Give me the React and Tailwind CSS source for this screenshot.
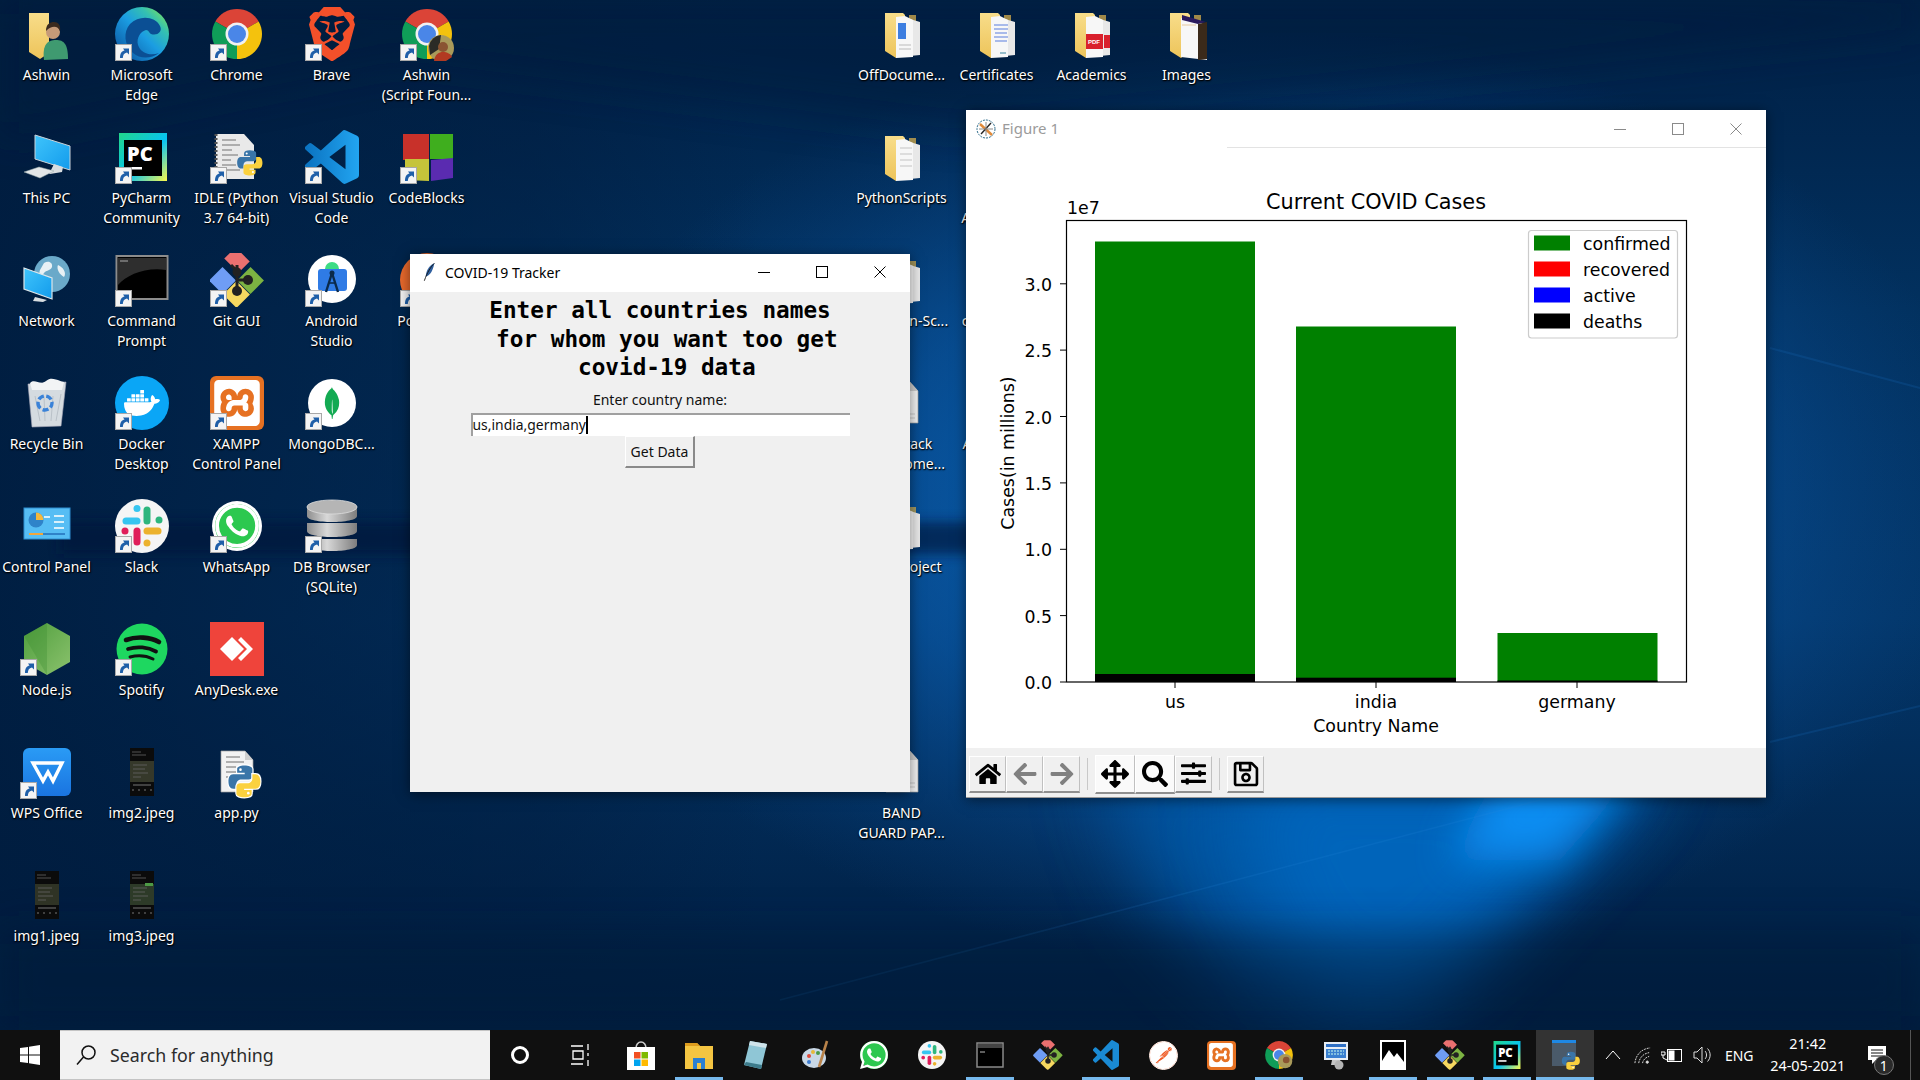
import React from "react";
import { FaHome, FaArrowLeft, FaArrowRight, FaArrowsAlt, FaSearch, FaSlidersH, FaRegSave } from "react-icons/fa";
import { SiBrave, SiDocker, SiXampp, SiMongodb, SiWhatsapp, SiPostman } from "react-icons/si";

const S = ({ children, size = 54, vb = "0 0 54 54", className = "" }) => (
  <svg viewBox={vb} width={size} height={size} className={"block " + className}>{children}</svg>
);

const Defs = () => (
  <svg width="0" height="0" className="absolute">
    <defs>
      <linearGradient id="edgeG" x1="0.1" y1="0.9" x2="0.9" y2="0.1">
        <stop offset="0" stopColor="#0c59a4" /><stop offset="0.5" stopColor="#1b9de2" /><stop offset="0.8" stopColor="#35c1b0" /><stop offset="1" stopColor="#6fdc6a" />
      </linearGradient>
      <linearGradient id="folderG" x1="0" y1="0" x2="0" y2="1">
        <stop offset="0" stopColor="#f8dd8a" /><stop offset="1" stopColor="#edc45a" />
      </linearGradient>
      <linearGradient id="pcG" x1="0" y1="0" x2="1" y2="1">
        <stop offset="0" stopColor="#21d789" /><stop offset="0.55" stopColor="#07c3f2" /><stop offset="1" stopColor="#fcf84a" />
      </linearGradient>
      <linearGradient id="monG" x1="0" y1="0" x2="1" y2="1">
        <stop offset="0" stopColor="#3fc4fb" /><stop offset="1" stopColor="#129bec" />
      </linearGradient>
      <linearGradient id="nodeG" x1="0" y1="0" x2="1" y2="1">
        <stop offset="0" stopColor="#4f9e3d" /><stop offset="1" stopColor="#8bc26d" />
      </linearGradient>
      <linearGradient id="dbG" x1="0" y1="0" x2="1" y2="0">
        <stop offset="0" stopColor="#8e8e8e" /><stop offset="0.4" stopColor="#d8d8d8" /><stop offset="1" stopColor="#7d7d7d" />
      </linearGradient>
      <linearGradient id="wpsG" x1="0" y1="0" x2="0" y2="1">
        <stop offset="0" stopColor="#2a9bf5" /><stop offset="1" stopColor="#1a74e0" />
      </linearGradient>
      <linearGradient id="vsG" x1="0" y1="0" x2="1" y2="0">
        <stop offset="0" stopColor="#0a72c0" /><stop offset="1" stopColor="#22a5f1" />
      </linearGradient>
      <linearGradient id="bgBase" x1="0" y1="0" x2="0" y2="1">
        <stop offset="0" stopColor="#001f44" /><stop offset="0.3" stopColor="#02315f" /><stop offset="0.6" stopColor="#033669" /><stop offset="1" stopColor="#001c3e" />
      </linearGradient>
      <radialGradient id="bgMid" cx="0.5" cy="0.5" r="0.5">
        <stop offset="0" stopColor="#0a72cf" stopOpacity="0.95" /><stop offset="0.55" stopColor="#0a5cae" stopOpacity="0.6" /><stop offset="1" stopColor="#0a4a90" stopOpacity="0" />
      </radialGradient>
      <linearGradient id="bgLeft" x1="0" y1="0" x2="1" y2="0">
        <stop offset="0" stopColor="#001c3e" stopOpacity="0.9" /><stop offset="0.7" stopColor="#001c3e" stopOpacity="0.45" /><stop offset="1" stopColor="#001c3e" stopOpacity="0" />
      </linearGradient>
      <filter id="blur6" filterUnits="userSpaceOnUse" x="0" y="0" width="1920" height="1030"><feGaussianBlur stdDeviation="6" /></filter>
      <filter id="blur20" filterUnits="userSpaceOnUse" x="0" y="0" width="1920" height="1030"><feGaussianBlur stdDeviation="20" /></filter>
      <filter id="blur40" filterUnits="userSpaceOnUse" x="0" y="0" width="1920" height="1030"><feGaussianBlur stdDeviation="40" /></filter>
    </defs>
  </svg>
);

const Wallpaper = () => (
  <svg viewBox="0 0 1920 1030" width="1920" height="1030" className="absolute left-0 top-0">
    <rect width="1920" height="1030" fill="url(#bgBase)" />
    <ellipse cx="1270" cy="500" rx="720" ry="470" fill="url(#bgMid)" />
    <rect x="0" y="0" width="760" height="1030" fill="url(#bgLeft)" />
    <path d="M0 140 L400 60 L960 130 L1920 30 V0 H0Z" fill="#001a3c" opacity="0.5" filter="url(#blur20)" />
    <rect x="60" y="522" width="1000" height="32" fill="#00173a" opacity="0.65" filter="url(#blur6)" />
    <path d="M1100 760 H1650 L1480 940 L1250 1000 L1150 900Z" fill="#0560b5" opacity="0.7" filter="url(#blur40)" />
    <path d="M1240 760 L1660 760 L1540 880 L1430 1000 L1320 1000 L1250 880Z" fill="#0567c0" opacity="0.85" filter="url(#blur40)" />
    <path d="M1500 770 H1640 L1560 860 H1450Z" fill="#0a90f5" opacity="0.95" filter="url(#blur20)" />
    <path d="M780 1000 L1540 800" stroke="#2d8de0" strokeWidth="1.5" opacity="0.15" />
    <path d="M1770 348 L1920 388 M1770 742 L1920 706" stroke="#1464b0" strokeWidth="2" opacity="0.25" />
    <rect x="0" y="930" width="1920" height="100" fill="#001a3a" opacity="0.45" filter="url(#blur20)" />
  </svg>
);

const Shortcut = () => (
  <span className="absolute left-0 bottom-0 block w-[17px] h-[17px] bg-[#f4f4f4] border border-[#a8a8a8]">
    <svg viewBox="0 0 15 15" width="15" height="15" className="block">
      <path d="M4 13 C4 8 6 6 8.5 5.5 L7 3.5 H13 V9.5 L11 7.5 C8 8 7 10 6.8 13Z" fill="#1f5fa8" />
    </svg>
  </span>
);

const PyLogo = ({ x = 0, y = 0, s = 1, outline = false }) => (
  <g transform={`translate(${x} ${y}) scale(${s})`}>
    <path d="M12 1C9 1 7 1.8 7 3.6V6h5.2v1H4.2C2 7 1 9 1 12s1.2 5 3.2 5h2.3v-3c0-2 1.6-3.3 3.4-3.3h5c1.6 0 2.6-1 2.6-2.6V3.6C17.500 1.800 15 1 12 1z" fill="#3a75a8" stroke={outline ? "#fff" : "none"} strokeWidth={outline ? 1.6 : 0} paintOrder="stroke" />
    <path d="M12 23c3 0 5-.8 5-2.6V18h-5.2v-1h8c2.200 0 3.200-2 3.200-5s-1.200-5-3.200-5h-2.300v3c0 2-1.600 3.300-3.400 3.300h-5c-1.600 0-2.600 1-2.600 2.600v4.500C6.500 22.200 9 23 12 23z" fill="#fbd13e" stroke={outline ? "#fff" : "none"} strokeWidth={outline ? 1.6 : 0} paintOrder="stroke" />
    <circle cx="9.3" cy="3.9" r="0.9" fill="#fff" /><circle cx="14.7" cy="20.1" r="0.9" fill="#fff" />
  </g>
);

const ChromeArt = () => (
  <>
    <path d="M27 27L5.35 14.5A25 25 0 0 1 48.65 14.5Z" fill="#db4437" />
    <path d="M27 27L48.65 14.5A25 25 0 0 1 27 52Z" fill="#f4c20d" />
    <path d="M27 27L27 52A25 25 0 0 1 5.35 14.5Z" fill="#0f9d58" />
    <circle cx="27" cy="27" r="11.5" fill="#f1f1f1" /><circle cx="27" cy="27" r="9" fill="#4a86e8" />
  </>
);

const FolderBase = ({ children }) => (
  <S>
    <path d="M10 6h18l2 2v36L21 51 10 44z" fill="url(#folderG)" />
    <path d="M34 8h7v40h-7z" fill="#e4b84d" opacity="0.7" />
    {children}
  </S>
);

const Pages = () => (
  <>
    <path d="M35 12l10 3v33l-10 1z" fill="#e8e8e8" />
    <path d="M21 10l9-1 8 4v37l-17 1z" fill="#f7f7f7" />
  </>
);

const Doc = ({ children, fill = "#f2f2f2" }) => (
  <>
    <path d="M11 6h24l8 9v32H11z" fill={fill} stroke="#9d9d9d" strokeWidth="0.7" />
    <path d="M35 6v9h8z" fill="#cfcfcf" />
    {children}
  </>
);

const Thumb = ({ tint = "#2d2f24", accent }) => (
  <S>
    <rect x="15" y="3" width="24" height="48" fill="#0b0b0b" />
    <rect x="15" y="16" width="24" height="21" fill={tint} />
    <path d="M17 7h9M17 10h14M18 20h14M18 24h12M18 28h15M18 32h8" stroke="#666" strokeWidth="0.8" />
    {accent && <rect x="30" y="15" width="8" height="3" fill={accent} />}
    <path d="M17 45h2M23 45h2M29 45h2M35 45h2M18 40h18" stroke="#777" strokeWidth="1" />
  </S>
);

const ICONS = {
  user: (
    <S>
      <path d="M9 6h20v40l-9 6-11-7z" fill="url(#folderG)" />
      <path d="M24 53c-2-16 4-20 12-20s12 4 12 19z" fill="#3f9a70" />
      <circle cx="33" cy="25" r="7" fill="#c59a78" /><path d="M26 24c0-7 4-9 8-9s7 3 6 9c-2-5-8-6-14 0z" fill="#3a2a1e" />
    </S>
  ),
  edge: (
    <S>
      <circle cx="27" cy="27" r="27" fill="url(#edgeG)" />
      <path d="M36 27c6 2 12-2 9-8C40 9 24 8 15 17 8 25 9 38 18 46c7 6 18 6 26 0-8 3-18 1-21-8-2-7 3-14 8-15 3 0 3 3 5 4z" fill="#0b4f94" />
    </S>
  ),
  chrome: <S><ChromeArt /></S>,
  brave: <SiBrave size={54} color="#f4502a" className="block" />,
  scriptChrome: (
    <S>
      <ChromeArt />
      <circle cx="41" cy="41" r="13" fill="#a99a5a" /><path d="M29 39a13 13 0 0 1 12-11l-2 14-9 6z" fill="#2b2b26" />
      <circle cx="43" cy="40" r="5" fill="#8a5432" /><path d="M34 54c1-7 5-9 9-9s8 2 9 5l-6 4z" fill="#b23a22" />
    </S>
  ),
  pc: (
    <S>
      <path d="M15 5l35 11v24L15 29z" fill="url(#monG)" stroke="#c9d2d9" strokeWidth="1" />
      <path d="M34 34l9 3-1 5-12 2-3-2 4-2z" fill="#d8dde0" />
      <path d="M4 42l15-5 15 4-14 7z" fill="#e3e6e8" stroke="#9aa" strokeWidth="0.5" />
    </S>
  ),
  pycharm: (
    <S>
      <rect x="4" y="3" width="48" height="48" fill="url(#pcG)" />
      <rect x="9" y="10" width="38" height="36" fill="#000" />
      <text x="12" y="31" fontFamily="Open Sans, sans-serif" fontWeight="800" fontSize="20" fill="#fff">PC</text>
      <rect x="12" y="37" width="15" height="2.5" fill="#fff" />
    </S>
  ),
  idle: (
    <S>
      <path d="M6 4h28l10 11v34H6z" fill="#e9e9e9" />
      <path d="M6 4v45" stroke="#555" strokeWidth="3" strokeDasharray="2 2" />
      <path d="M12 10h14M12 15h18M12 20h10M12 25h16M12 30h9M12 35h14M12 40h18" stroke="#999" strokeWidth="1.3" />
      <PyLogo x={26} y={19} s={1.15} />
    </S>
  ),
  vscode: (
    <S vb="0 0 24 24">
      <path fill="url(#vsG)" d="M23.15 2.587L18.21.21a1.494 1.494 0 0 0-1.705.29l-9.46 8.63-4.12-3.128a.999.999 0 0 0-1.276.057L.327 7.261A1 1 0 0 0 .326 8.74L3.899 12 .326 15.26a1 1 0 0 0 .001 1.479L1.65 17.94a.999.999 0 0 0 1.276.057l4.12-3.128 9.46 8.63a1.492 1.492 0 0 0 1.704.29l4.942-2.377A1.5 1.5 0 0 0 24 20.06V3.939a1.5 1.5 0 0 0-.85-1.352zm-5.146 14.861L10.826 12l7.178-5.448v10.896z" />
    </S>
  ),
  codeblocks: (
    <S>
      <rect x="3" y="4" width="26" height="26" fill="#c8312a" />
      <rect x="30" y="4" width="23" height="25" fill="#3fae1e" />
      <path d="M5 29h24v22l-24-1z" fill="#c5c43a" />
      <path d="M31 30l22-2v20l-22 3z" fill="#5a2bb0" />
    </S>
  ),
  network: (
    <S>
      <circle cx="32" cy="21" r="18" fill="#6aa9c9" /><path d="M24 10c5-3 9 0 8 4s-8 3-9 8-5 0-3-5zM38 12c5 2 9 8 6 12-4-2-8-8-6-12z" fill="#e8f1f5" />
      <path d="M4 15l28 10v21L4 36z" fill="url(#monG)" stroke="#dce6ea" strokeWidth="1.2" />
      <path d="M15 44l12 3-4 2-10-1z" fill="#d8dde0" />
    </S>
  ),
  cmd: (
    <S>
      <rect x="1.5" y="3" width="51" height="43" fill="#000" stroke="#8c8c8c" strokeWidth="2" />
      <path d="M3 5h48v12C30 14 12 22 3 32z" fill="#2e2e2e" />
      <path d="M5 8h8" stroke="#aaa" strokeWidth="1" />
    </S>
  ),
  git: (
    <S>
      <rect x="17" y="-1" width="20" height="16" transform="rotate(45 27 7)" fill="#ea7070" />
      <rect x="3" y="18" width="19" height="19" transform="rotate(45 12.5 27.5)" fill="#6f9df5" />
      <rect x="31" y="18" width="19" height="19" transform="rotate(45 40.5 27.5)" fill="#7cb342" />
      <rect x="17" y="32" width="19" height="19" transform="rotate(45 26.5 41.5)" fill="#f6d860" />
      <path d="M27 12v25M27 27l13 0M21 12l6 6" stroke="#222" strokeWidth="3" />
      <circle cx="27" cy="38" r="5" fill="#222" /><circle cx="38" cy="27" r="5" fill="#222" /><circle cx="27" cy="19" r="4.5" fill="#222" />
    </S>
  ),
  android: (
    <S>
      <circle cx="27" cy="26" r="24" fill="#fff" />
      <path d="M20 16a7 7 0 0 1 14 0z" fill="#3ddc84" />
      <rect x="13" y="16" width="29" height="22" rx="3" fill="#2f7be5" />
      <path d="M27 20l-6 19M27 20l6 19" stroke="#0b2a4a" strokeWidth="2.4" />
      <circle cx="27" cy="20" r="2.5" fill="#0b2a4a" /><path d="M23 30h8" stroke="#0b2a4a" strokeWidth="1.6" />
    </S>
  ),
  postman: <span className="block w-[54px] h-[54px] rounded-full bg-[#e8692c]" />,
  recycle: (
    <S>
      <path d="M8 8l38-2-5 44-29 1z" fill="#d5dbe0" stroke="#aab" strokeWidth="0.6" />
      <path d="M10 7c5-5 10 3 16-2s12 0 18 1l-2 8H12z" fill="#f2f4f5" />
      <path d="M15 20l5 25M24 20l1 25M33 20l-2 25M41 18l-5 27" stroke="#b3bac1" strokeWidth="0.8" />
      <path d="M18 27a7 7 0 1 0 14 0 7 7 0 1 0-14 0" fill="none" stroke="#3a82d8" strokeWidth="3.4" strokeDasharray="6 2.5" />
    </S>
  ),
  docker: (
    <span className="flex w-[54px] h-[54px] rounded-full bg-[#0aa6f6] items-center justify-center">
      <SiDocker size={36} color="#fff" className="block" />
    </span>
  ),
  xampp: (
    <span className="flex w-[54px] h-[54px] rounded-md bg-[#e67122] items-center justify-center">
      <SiXampp size={46} color="#fff" className="block" />
    </span>
  ),
  mongo: (
    <span className="flex w-[48px] h-[48px] ml-[3px] mt-[3px] rounded-full bg-white items-center justify-center">
      <SiMongodb size={32} color="#13aa52" className="block" />
    </span>
  ),
  control: (
    <S>
      <rect x="4" y="9" width="46" height="31" fill="#56bdf4" stroke="#2f8ed0" strokeWidth="1" />
      <circle cx="16" cy="21" r="7.5" fill="#2f83c9" /><path d="M16 21v-7.5a7.5 7.5 0 0 1 7.5 7.5z" fill="#f5b93d" />
      <path d="M24 18h6M34 17h10M34 23h10M34 29h10" stroke="#d8f0fb" strokeWidth="2" />
      <path d="M9 35h14" stroke="#f0a63c" strokeWidth="2" /><path d="M23 35h22" stroke="#2f83c9" strokeWidth="2" />
    </S>
  ),
  slack: (
    <S>
      <circle cx="27" cy="27" r="27" fill="#f5f5f5" />
      <g strokeLinecap="round" strokeWidth="7" fill="none">
        <path d="M11 22h11" stroke="#36c5f0" /><path d="M22 9.500v.1" stroke="#36c5f0" />
        <path d="M32 11v11" stroke="#2eb67d" /><path d="M44 21v.1" stroke="#2eb67d" />
        <path d="M32 32h11" stroke="#ecb22e" /><path d="M32 44v.1" stroke="#ecb22e" />
        <path d="M22 32v11" stroke="#e01e5a" /><path d="M10 32v.1" stroke="#e01e5a" />
      </g>
    </S>
  ),
  whatsapp: (
    <span className="flex w-[50px] h-[50px] ml-[2px] mt-[2px] rounded-full bg-white items-center justify-center relative">
      <span className="absolute inset-[3px] rounded-full bg-[#2cc84f]" />
      <SiWhatsapp size={44} color="#fff" className="block relative" />
    </span>
  ),
  db: (
    <S>
      <path d="M2 40v6c0 8 50 8 50 0v-6zM2 24v8c0 8 50 8 50 0v-8zM2 7v10c0 8 50 8 50 0V7z" fill="url(#dbG)" />
      <ellipse cx="27" cy="8" rx="25" ry="7" fill="#b5b5b5" stroke="#ddd" strokeWidth="0.8" />
    </S>
  ),
  node: (
    <S>
      <path d="M27 1l23 13v26L27 53 4 40V14z" fill="url(#nodeG)" />
      <path d="M4 14l23 39V1z" fill="#3f8f34" opacity="0.35" />
    </S>
  ),
  spotify: (
    <S>
      <circle cx="27" cy="27" r="25.5" fill="#1ed760" />
      <path d="M11 18c11-4 24-3 33 2" stroke="#111" strokeWidth="4.6" strokeLinecap="round" fill="none" />
      <path d="M13 27c9-3 20-2 28 2.500" stroke="#111" strokeWidth="3.8" strokeLinecap="round" fill="none" />
      <path d="M15 35c8-2 16-1.500 23 2" stroke="#111" strokeWidth="3" strokeLinecap="round" fill="none" />
    </S>
  ),
  anydesk: (
    <S>
      <rect width="54" height="54" fill="#ef443b" />
      <path d="M22 15l12 12-12 12-12-12z" fill="#fff" />
      <path d="M31 15l12 12-12 12-3-3 9-9-9-9z" fill="#fff" />
    </S>
  ),
  wps: (
    <S>
      <rect x="3" y="3" width="48" height="48" rx="6" fill="url(#wpsG)" />
      <path d="M13 18H42L33 36 28 27 23 36z" fill="none" stroke="#fff" strokeWidth="3.4" strokeLinejoin="miter" />
    </S>
  ),
  img1: <Thumb tint="#2f3325" />,
  img2: <Thumb tint="#35382a" />,
  img3: <Thumb tint="#2d3a28" accent="#4d9a45" />,
  py: (
    <S>
      <Doc><path d="M16 12h14M16 17h18M16 22h10M16 27h10M16 32h8" stroke="#999" strokeWidth="1.6" /></Doc>
      <PyLogo x={17} y={19} s={1.45} outline />
    </S>
  ),
  off: <FolderBase><Pages /><rect x="23" y="16" width="8" height="16" fill="#3d7ee0" /><path d="M24 38h12M24 42h12" stroke="#bbb" /></FolderBase>,
  cert: <FolderBase><Pages /><path d="M24 18h14M24 22h14M25 26h12M24 30h14M25 34h12" stroke="#8fa7e6" strokeWidth="1.3" /><path d="M30 46h6" stroke="#7ab" strokeWidth="1.500" /></FolderBase>,
  acad: <FolderBase><Pages /><rect x="21" y="27" width="17" height="15" fill="#d9202c" /><rect x="39" y="28" width="6" height="13" fill="#d9202c" /><text x="23" y="37" fontSize="6" fontWeight="700" fill="#fff" fontFamily="Liberation Sans, sans-serif">PDF</text></FolderBase>,
  imgs: (
    <FolderBase>
      <path d="M21 11l26 6v36l-26-3z" fill="#f7f7f7" />
      <path d="M22 8l24 7-8 2-16-4z" fill="#2a1a5e" />
      <path d="M38 17l9-2v37l-9 1z" fill="#3b2a1a" />
      <path d="M22 18h14" stroke="#e6c9a0" strokeWidth="1" />
    </FolderBase>
  ),
  scripts: <FolderBase><Pages /><path d="M25 18h12M25 24h12M25 30h12M25 36h12" stroke="#ddd" strokeWidth="2" /></FolderBase>,
  folder: <FolderBase><Pages /></FolderBase>,
  doc: <S><Doc fill="#f4f4f4"><path d="M14 38h26M14 42h26" stroke="#ccc" /></Doc></S>,
};

const Item = ({ icon, label, shortcut = true }) => (
  <div className="flex flex-col items-center pt-[7px] w-[95px]">
    <div className="relative w-[54px] h-[54px]">
      {ICONS[icon]}
      {shortcut && <Shortcut />}
    </div>
    <div className="mt-[4px] text-center text-white text-[14px] leading-[20px] whitespace-pre [text-shadow:0_1px_2px_#000,1px_1px_1px_rgba(0,0,0,0.8)] font-['Noto_Sans',sans-serif]">{label}</div>
  </div>
);

const LEFT = [
  ["user", "Ashwin", false], ["edge", "Microsoft\nEdge"], ["chrome", "Chrome"], ["brave", "Brave"], ["scriptChrome", "Ashwin\n(Script Foun..."],
  ["pc", "This PC", false], ["pycharm", "PyCharm\nCommunity"], ["idle", "IDLE (Python\n3.7 64-bit)"], ["vscode", "Visual Studio\nCode"], ["codeblocks", "CodeBlocks"],
  ["network", "Network", false], ["cmd", "Command\nPrompt"], ["git", "Git GUI"], ["android", "Android\nStudio"], ["postman", "Postman"],
  ["recycle", "Recycle Bin", false], ["docker", "Docker\nDesktop"], ["xampp", "XAMPP\nControl Panel"], ["mongo", "MongoDBC..."], null,
  ["control", "Control Panel", false], ["slack", "Slack"], ["whatsapp", "WhatsApp"], ["db", "DB Browser\n(SQLite)"], null,
  ["node", "Node.js"], ["spotify", "Spotify"], ["anydesk", "AnyDesk.exe", false], null, null,
  ["wps", "WPS Office"], ["img2", "img2.jpeg", false], ["py", "app.py", false], null, null,
  ["img1", "img1.jpeg", false], ["img3", "img3.jpeg", false], null, null, null,
];

const RIGHT = [
  ["off", "OffDocume...", false], ["cert", "Certificates", false], ["acad", "Academics", false], ["imgs", "Images", false],
  ["scripts", "PythonScripts", false], ["folder", "x\nAdobe Rea", false], null, null,
  ["folder", "Python3n-Sc...", false], ["folder", "cmder-por", false], null, null,
  ["doc", "Full Stack\nDev Chome...", false], ["folder", "Atom-Port", false], null, null,
  ["folder", "DMS Project", false], null, null, null,
  null, null, null, null,
  ["doc", "BAND\nGUARD PAP...", false], null, null, null,
];

const IconGrid = ({ items, className }) => (
  <div className={className}>
    {items.map((it, i) => (it ? <Item key={i} icon={it[0]} label={it[1]} shortcut={it[2] !== false} /> : <div key={i} />))}
  </div>
);

const WinBtns = ({ color = "#000" }) => (
  <div className="flex items-center h-full">
    <div className="w-[58px] flex justify-center">
      <svg width="12" height="12"><path d="M0 6.500h12" stroke={color} strokeWidth="1" /></svg>
    </div>
    <div className="w-[58px] flex justify-center">
      <svg width="12" height="12"><rect x="0.5" y="0.5" width="11" height="11" fill="none" stroke={color} /></svg>
    </div>
    <div className="w-[58px] flex justify-center">
      <svg width="12" height="12"><path d="M0.5 0.5l11 11M11.5 0.5l-11 11" stroke={color} /></svg>
    </div>
  </div>
);

const TrackerWindow = () => (
  <div className="absolute left-[410px] top-[254px] w-[500px] h-[538px] bg-[#f0f0f0] flex flex-col shadow-[0_2px_12px_rgba(0,0,0,0.5)]">
    <div className="h-[38px] pb-[2px] bg-white flex items-center shrink-0">
      <svg viewBox="0 0 16 22" width="14" height="20" className="ml-[13px]">
        <path d="M13 1C8 3 4 8 3 16c3 0 8-4 10-15z" fill="#2f5f9e" />
        <path d="M13 1C9 5 5 11 1.500 21" stroke="#111" strokeWidth="1" fill="none" />
      </svg>
      <div className="ml-[8px] text-[14px] text-black font-['Noto_Sans',sans-serif]">COVID-19 Tracker</div>
      <div className="ml-auto mr-[1px]"><WinBtns /></div>
    </div>
    <div className="flex flex-col items-center">
      <div className="mt-[4px] whitespace-pre text-center font-['DejaVu_Sans_Mono',monospace] font-bold text-[22.7px] leading-[28.6px] text-black">{"Enter all countries names\n for whom you want too get\n covid-19 data"}</div>
      <div className="mt-[8px] text-[14px] leading-[20px] text-[#111] font-['Noto_Sans',sans-serif]">Enter country name:</div>
      <div className="mt-[3px] w-[379px] h-[23px] bg-white border-t-2 border-l-2 border-t-[#a0a0a0] border-l-[#a0a0a0] flex items-center text-[13.9px] text-[#111] font-['Noto_Sans',sans-serif]">
        <span>us,india,germany</span><span className="w-[2px] h-[18px] bg-black" />
      </div>
      <div className="w-[70px] h-[32px] bg-[#f0f0f0] border-t border-l border-t-white border-l-white border-b-2 border-r-2 border-b-[#8a8a8a] border-r-[#8a8a8a] flex items-center justify-center text-[14px] text-[#111] font-['Noto_Sans',sans-serif]">Get Data</div>
    </div>
  </div>
);

const yTicks = [["0.0", 682], ["0.5", 615.6], ["1.0", 549.3], ["1.5", 482.9], ["2.0", 416.5], ["2.5", 350.1], ["3.0", 283.8]];
const bars = [
  { name: "us", x: 1095, top: 241.5, death: 674, tick: 1175 },
  { name: "india", x: 1296, top: 326.5, death: 677.7, tick: 1376 },
  { name: "germany", x: 1497.5, top: 633, death: 680.5, tick: 1577 },
];
const legend = [["confirmed", "#008000", 243], ["recovered", "#ff0000", 269], ["active", "#0000ff", 295], ["deaths", "#000000", 321]];
const fontD = "DejaVu Sans, sans-serif";

const Chart = () => (
  <svg viewBox="966 148 800 600" width="800" height="600" className="block bg-white">
    <text x="1376" y="209" textAnchor="middle" fontFamily={fontD} fontSize="20.8" fill="#000">Current COVID Cases</text>
    <text x="1067" y="214" fontFamily={fontD} fontSize="17.36" fill="#000">1e7</text>
    {bars.map((b) => (
      <g key={b.name}>
        <rect x={b.x} y={b.top} width="160" height={682 - b.top} fill="#008000" />
        <rect x={b.x} y={b.death} width="160" height={682 - b.death} fill="#000" />
        <path d={`M${b.tick} 682v6`} stroke="#000" strokeWidth="1" />
        <text x={b.tick} y="708" textAnchor="middle" fontFamily={fontD} fontSize="17.36" fill="#000">{b.name}</text>
      </g>
    ))}
    {yTicks.map(([t, y]) => (
      <g key={t}>
        <path d={`M1060 ${y}h6`} stroke="#000" strokeWidth="1" />
        <text x="1052" y={y + 7} textAnchor="end" fontFamily={fontD} fontSize="17.36" fill="#000">{t}</text>
      </g>
    ))}
    <rect x="1066.5" y="220.5" width="620" height="461.5" fill="none" stroke="#000" strokeWidth="1.2" />
    <text x="1376" y="732" textAnchor="middle" fontFamily={fontD} fontSize="17.36" fill="#000">Country Name</text>
    <text transform="translate(1014 453) rotate(-90)" textAnchor="middle" fontFamily={fontD} fontSize="17.36" fill="#000">Cases(in millions)</text>
    <rect x="1528.5" y="230.5" width="149" height="107.5" rx="3" fill="#fff" fillOpacity="0.8" stroke="#cccccc" strokeWidth="1.2" />
    {legend.map(([t, c, y]) => (
      <g key={t}>
        <rect x="1534" y={y - 7.5} width="36" height="15" fill={c} />
        <text x="1583" y={y + 7} fontFamily={fontD} fontSize="17.36" fill="#000">{t}</text>
      </g>
    ))}
  </svg>
);

const TBtn = ({ children, big = false, w = "w-[37px]" }) => (
  <div className={(big ? "h-[39px] bg-[#fafafa] " : "h-[37px] bg-[#f0f0f0] ") + w + " flex items-center justify-center border-t border-l border-t-white border-l-white border-b-2 border-r border-b-[#8f8f8f] border-r-[#c0c0c0]"}>
    {children}
  </div>
);

const FigureWindow = () => (
  <div className="absolute left-[966px] top-[110px] w-[800px] h-[688px] bg-white flex flex-col shadow-[0_2px_12px_rgba(0,0,0,0.5)]">
    <div className="h-[38px] flex flex-col shrink-0">
      <div className="flex items-center flex-1">
        <svg viewBox="0 0 20 20" width="20" height="20" className="ml-[10px]">
          <circle cx="10" cy="10" r="9" fill="#fff" stroke="#2a6a8a" strokeWidth="1" strokeDasharray="2 1" />
          <path d="M4 5l12 11" stroke="#e08a3a" strokeWidth="2.4" /><path d="M15 4L5 15" stroke="#222" strokeWidth="1.4" /><path d="M10 3v14M3 10h14" stroke="#8a8a8a" strokeWidth="1" />
        </svg>
        <div className="ml-[6px] text-[15px] text-[#9b9b9b] font-['Noto_Sans',sans-serif]">Figure 1</div>
        <div className="ml-auto mr-[1px]"><WinBtns color="#8a8a8a" /></div>
      </div>
      <div className="ml-auto w-[539px] h-[1px] bg-[#e3e3e3]" />
    </div>
    <Chart />
    <div className="h-[50px] bg-[#f0f0f0] flex items-center pl-[3px] pt-[3px] border-b border-[#999]">
      <TBtn><FaHome size={26} color="#000" /></TBtn>
      <TBtn><FaArrowLeft size={26} color="#808080" /></TBtn>
      <TBtn><FaArrowRight size={26} color="#808080" /></TBtn>
      <div className="w-[1px] h-[32px] bg-[#c8c8c8] mx-[7px]" />
      <TBtn big w="w-[40px]"><FaArrowsAlt size={28} color="#000" /></TBtn>
      <TBtn big w="w-[40px]"><FaSearch size={26} color="#000" /></TBtn>
      <TBtn><FaSlidersH size={25} color="#000" /></TBtn>
      <div className="w-[1px] h-[32px] bg-[#c8c8c8] mx-[7px]" />
      <TBtn><FaRegSave size={28} color="#000" /></TBtn>
    </div>
  </div>
);

const T = ({ children, on = false, active = false, className = "" }) => (
  <div className={"relative w-[57.75px] h-full flex items-center justify-center " + (active ? "bg-[#333333] " : "") + className}>
    {children}
    {on && <span className={"absolute bottom-0 h-[3px] bg-[#76b9ed] " + (active ? "left-0 right-0" : "left-[5px] right-[5px]")} />}
  </div>
);

const Taskbar = () => (
  <div className="absolute left-0 right-0 bottom-0 h-[50px] bg-[#101010] flex items-stretch">
    <div className="w-[60px] flex items-center justify-center">
      <svg viewBox="0 0 20 20" width="20" height="20"><path d="M0 3l8-1v7.500H0zM9 1.800L20 0v9.500H9zM0 10.500h8V18l-8-1zM9 10.500h11V20L9 18.200z" fill="#fff" /></svg>
    </div>
    <div className="w-[430px] bg-[#f2f2f2] border-t border-b border-[#c4c4c4] flex items-center pl-[14px]">
      <svg viewBox="0 0 24 24" width="24" height="24" fill="none" stroke="#111" strokeWidth="1.5"><circle cx="14.5" cy="9.5" r="6.5" /><path d="M9.500 14L3 21.500" /></svg>
      <span className="ml-[12px] text-[17.8px] text-[#2b2b2b] font-['Noto_Sans',sans-serif]">Search for anything</span>
    </div>
    <div className="w-[60px] flex items-center justify-center"><span className="block w-[18px] h-[18px] rounded-full border-[3px] border-white" /></div>
    <div className="w-[62px] flex items-center justify-center"><svg viewBox="0 0 20 24" width="20" height="24" fill="none" stroke="#fff" strokeWidth="1.3"><path d="M0 3h12M0 21h12M2 8h10v8H2zM17 1v6M17 10v3M17 17v6" /></svg></div>
    <T>
      <svg viewBox="0 0 28 30" width="28" height="30">
        <path d="M9 8a5 6 0 0 1 10 0" fill="none" stroke="#ccc" strokeWidth="1.6" />
        <rect y="7" width="28" height="23" fill="#fff" />
        <rect x="7" y="12" width="6.5" height="6.5" fill="#f25022" /><rect x="14.5" y="12" width="6.5" height="6.5" fill="#7fba00" /><rect x="7" y="19.5" width="6.5" height="6.5" fill="#00a4ef" /><rect x="14.5" y="19.5" width="6.5" height="6.5" fill="#ffb900" />
      </svg>
    </T>
    <T on>
      <svg viewBox="0 0 28 28" width="28" height="28">
        <path d="M0 2h12l3 3h13v23H0z" fill="#f4c542" /><path d="M0 2h12l3 3H0z" fill="#dd9c1e" />
        <path d="M8 28V17h12v11h-4v-6h-4v6z" fill="#2a7fd2" />
      </svg>
    </T>
    <T>
      <svg viewBox="0 0 28 30" width="28" height="30"><path d="M8 1l17 3-6 25L2 25z" fill="#8fc6d6" /><path d="M8 1l17 3-1 4L7 5z" fill="#cfe3ea" /><path d="M2 25l17 4 1-4-16-3z" fill="#3d7b8b" /></svg>
    </T>
    <T className="ml-[2px]">
      <svg viewBox="0 0 30 30" width="30" height="30">
        <ellipse cx="13" cy="18" rx="12" ry="10" fill="#c9d8e6" /><circle cx="8" cy="16" r="2" fill="#e04a3a" /><circle cx="12" cy="12" r="2" fill="#e8b93a" /><circle cx="17" cy="13" r="2" fill="#4a9a4a" /><circle cx="8" cy="22" r="2" fill="#3a7ad0" />
        <path d="M26 1l-8 26" stroke="#b9834a" strokeWidth="2.6" /></svg>
    </T>
    <T><span className="flex w-[28px] h-[28px] rounded-full bg-[#2cc84f] items-center justify-center"><SiWhatsapp size={28} color="#fff" /></span></T>
    <T><span className="block"><svg viewBox="0 0 54 54" width="28" height="28">
      <circle cx="27" cy="27" r="27" fill="#f5f5f5" />
      <g strokeLinecap="round" strokeWidth="7" fill="none">
        <path d="M11 22h11" stroke="#36c5f0" /><path d="M22 9.500v.1" stroke="#36c5f0" />
        <path d="M32 11v11" stroke="#2eb67d" /><path d="M44 21v.1" stroke="#2eb67d" />
        <path d="M32 32h11" stroke="#ecb22e" /><path d="M32 44v.1" stroke="#ecb22e" />
        <path d="M22 32v11" stroke="#e01e5a" /><path d="M10 32v.1" stroke="#e01e5a" />
      </g></svg></span></T>
    <T on className="ml-[0.5px]"><svg viewBox="0 0 28 28" width="28" height="28"><rect x="1" y="2" width="26" height="24" fill="#000" stroke="#8a8a8a" strokeWidth="1.5" /><path d="M2 3h24v4H2z" fill="#444" /><path d="M4 11h5" stroke="#bbb" /></svg></T>
    <T><span className="block scale-[0.55]">{ICONS.git}</span></T>
    <T on className="ml-[0.5px]"><svg viewBox="0 0 24 24" width="26" height="30" preserveAspectRatio="none"><path fill="#1a8ad4" d="M23.15 2.587L18.21.21a1.494 1.494 0 0 0-1.705.29l-9.46 8.63-4.12-3.128a.999.999 0 0 0-1.276.057L.327 7.261A1 1 0 0 0 .326 8.74L3.899 12 .326 15.26a1 1 0 0 0 .001 1.479L1.65 17.94a.999.999 0 0 0 1.276.057l4.12-3.128 9.46 8.63a1.492 1.492 0 0 0 1.704.29l4.942-2.377A1.5 1.5 0 0 0 24 20.06V3.939a1.5 1.5 0 0 0-.85-1.352zm-5.146 14.861L10.826 12l7.178-5.448v10.896z" /></svg></T>
    <T><span className="flex w-[29px] h-[29px] rounded-full bg-[#ef5b25] items-center justify-center border border-white"><SiPostman size={27} color="#fff" /></span></T>
    <T><span className="flex w-[29px] h-[29px] rounded-[4px] bg-[#e67122] items-center justify-center"><SiXampp size={24} color="#fff" /></span></T>
    <T on><span className="block relative"><svg viewBox="0 0 54 54" width="30" height="30"><ChromeArt /><circle cx="38" cy="38" r="13" fill="#a99a5a" /><circle cx="40" cy="36" r="6" fill="#8a5432" /></svg></span></T>
    <T className="ml-[-2px]"><svg viewBox="0 0 30 30" width="30" height="30"><rect x="4" y="2" width="24" height="18" fill="#e8eef5" /><rect x="6" y="4" width="20" height="3" fill="#2e6fc4" /><rect x="6" y="9" width="20" height="9" fill="#3a7fd0" /><path d="M8 11h16M8 14h16" stroke="#cfe" strokeWidth="1" strokeDasharray="2 1" /><path d="M12 20h8l1 5h-10z" fill="#c7c7c7" /><circle cx="19" cy="25" r="4.5" fill="#b5b5b5" /></svg></T>
    <T on><svg viewBox="0 0 26 30" width="26" height="30"><rect width="26" height="30" fill="#fff" /><rect x="2" y="2" width="22" height="26" fill="#000" /><path d="M2 28v-7l7-11 5 7 3-4 7 9v6z" fill="#fff" /></svg></T>
    <T on><span className="block scale-[0.55]">{ICONS.git}</span></T>
    <T on className="ml-[-1px]"><svg viewBox="0 0 54 54" width="28" height="28"><rect x="1" y="0" width="52" height="54" fill="url(#pcG)" /><rect x="6" y="7" width="42" height="40" fill="#000" /><text x="10" y="31" fontFamily="Open Sans, sans-serif" fontWeight="800" fontSize="22" fill="#fff">PC</text><rect x="10" y="37" width="16" height="3" fill="#fff" /></svg></T>
    <T on active><svg viewBox="0 0 30 32" width="30" height="32"><rect x="2" y="1" width="24" height="26" fill="#4a5a6a" /><rect x="2" y="1" width="24" height="3" fill="#1e88e5" /><PyLogo x={11} y={12} s={0.82} /></svg></T>
    <div className="w-[4px]" />
    <div className="w-[30px] flex items-center justify-center"><svg width="16" height="10" fill="none" stroke="#fff" strokeWidth="1"><path d="M1 9l7-8 7 8" /></svg></div>
    <div className="w-[30px] flex items-center justify-center"><svg viewBox="0 0 20 20" width="19" height="19" fill="none" stroke="#ddd" strokeWidth="1"><path d="M2 18C3 9 9 3 18 2M6 18c1-6 5-10 11-11M10 18c.5-3 3-6 7-7" strokeDasharray="2 1" /><circle cx="15" cy="17" r="1.2" fill="#ddd" /></svg></div>
    <div className="w-[29px] flex items-center justify-center"><svg viewBox="0 0 22 16" width="22" height="16" fill="none" stroke="#fff" strokeWidth="1"><rect x="6.5" y="2.5" width="14" height="12" /><rect x="8" y="4" width="5" height="9" fill="#fff" /><path d="M0 5h4v3H0zM2 8v3l4 2" /></svg></div>
    <div className="w-[30px] flex items-center justify-center"><svg viewBox="0 0 20 20" width="20" height="20" fill="none" stroke="#ddd" strokeWidth="1"><path d="M2 7h3l5-5v16l-5-5H2zM13 6c2 2 2 6 0 8M15.500 3.500c3.500 3.500 3.500 9.500 0 13" /></svg></div>
    <div className="w-[45px] flex items-center justify-center text-[14px] text-white font-['Noto_Sans',sans-serif]">ENG</div>
    <div className="w-[92px] flex flex-col items-center justify-center text-white text-[14.4px] leading-[22px] font-['Noto_Sans',sans-serif]">
      <div>21:42</div><div>24-05-2021</div>
    </div>
    <div className="w-[46px] relative flex items-center justify-center">
      <svg viewBox="0 0 20 20" width="20" height="20"><path d="M1 1h18v14H9l-4 4v-4H1z" fill="#fff" /><path d="M4 5h12M4 8h12M4 11h12" stroke="#111" strokeWidth="1" /></svg>
      <span className="absolute right-[6px] bottom-[5px] w-[20px] h-[20px] rounded-full bg-[#2a2a2a] border border-[#777] flex items-center justify-center text-white text-[14px] font-['Noto_Sans',sans-serif]">1</span>
    </div>
    <div className="flex-1 border-l border-[#555] ml-[10px]" />
  </div>
);

export default function App() {
  return (
    <div className="relative w-[1920px] h-[1080px] overflow-hidden bg-[#01254e]">
      <Defs />
      <Wallpaper />
      <IconGrid items={LEFT} className="absolute left-[-1px] top-0 grid grid-cols-[repeat(5,95px)] auto-rows-[123px]" />
      <IconGrid items={RIGHT} className="absolute left-[854px] top-0 grid grid-cols-[repeat(4,95px)] auto-rows-[123px]" />
      <TrackerWindow />
      <FigureWindow />
      <Taskbar />
    </div>
  );
}
